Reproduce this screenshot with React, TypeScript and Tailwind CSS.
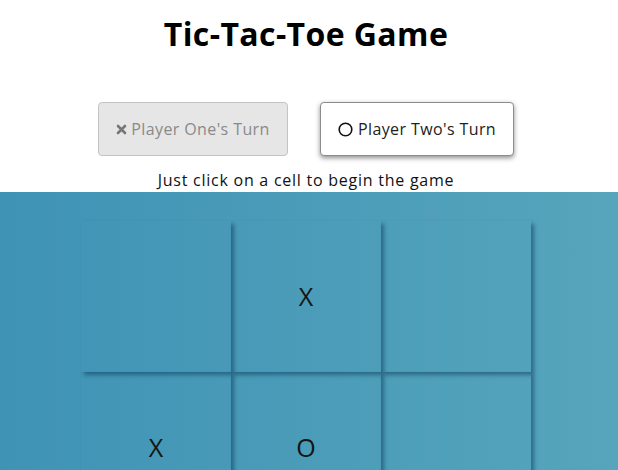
import React from 'react';

type Mark = 'X' | 'O' | '';

const board: Mark[] = ['', 'X', '', 'X', 'O', '', '', '', ''];

const font = { fontFamily: '"Open Sans", "DejaVu Sans", sans-serif' };

export default function App() {
  return (
    <div className="min-h-screen bg-white text-black" style={font}>
      <h1 className="pr-[6px] pt-[13px] text-center text-[32px] font-bold leading-[42px] tracking-[0.4px]">Tic-Tac-Toe Game</h1>

      {/* Turn indicators */}
      <div className="mt-[47px] flex justify-center gap-[32px] pr-[6px]">
        <button className="flex h-[54px] w-[190px] items-center justify-center gap-[4px] rounded-[4px] border border-[#c4c4c4] bg-[#e6e6e6] text-[16px] tracking-[0.4px] text-[#8a8a8a]">
          <svg width="11" height="11" viewBox="0 0 11 11" className="mt-[1px]">
            <path d="M2 2 L9 9 M9 2 L2 9" stroke="#777" strokeWidth="2.6" strokeLinecap="round" />
          </svg>
          Player One's Turn
        </button>
        <button className="flex h-[54px] w-[194px] items-center justify-center gap-[5px] rounded-[4px] border border-[#8c8c8c] bg-white text-[16px] tracking-[0.4px] text-[#222] shadow-[0_2px_5px_rgba(0,0,0,0.45)]">
          <svg width="15" height="15" viewBox="0 0 15 15" className="mt-[1px]">
            <circle cx="7.5" cy="7.5" r="6.3" fill="none" stroke="#111" strokeWidth="1.6" />
          </svg>
          Player Two's Turn
        </button>
      </div>

      <p className="mt-[13px] pb-[1px] pr-[6px] text-center text-[16px] leading-[22px] tracking-[0.75px] text-[#111]">Just click on a cell to begin the game</p>

      {/* Board */}
      <div className="flex h-[278px] justify-center overflow-hidden bg-gradient-to-r from-[#3f93b5] to-[#56a5bc] pr-[6px] pt-[29px]">
        <div className="grid h-fit grid-cols-[repeat(3,150px)]">
          {board.map((m, i) => (
            <div
              key={i}
              className="flex h-[151px] items-center justify-center text-[25px] font-normal text-[#141414] shadow-[3px_3px_4px_rgba(0,40,70,0.45)]"
            >
              {m}
            </div>
          ))}
        </div>
      </div>
    </div>
  );
}
